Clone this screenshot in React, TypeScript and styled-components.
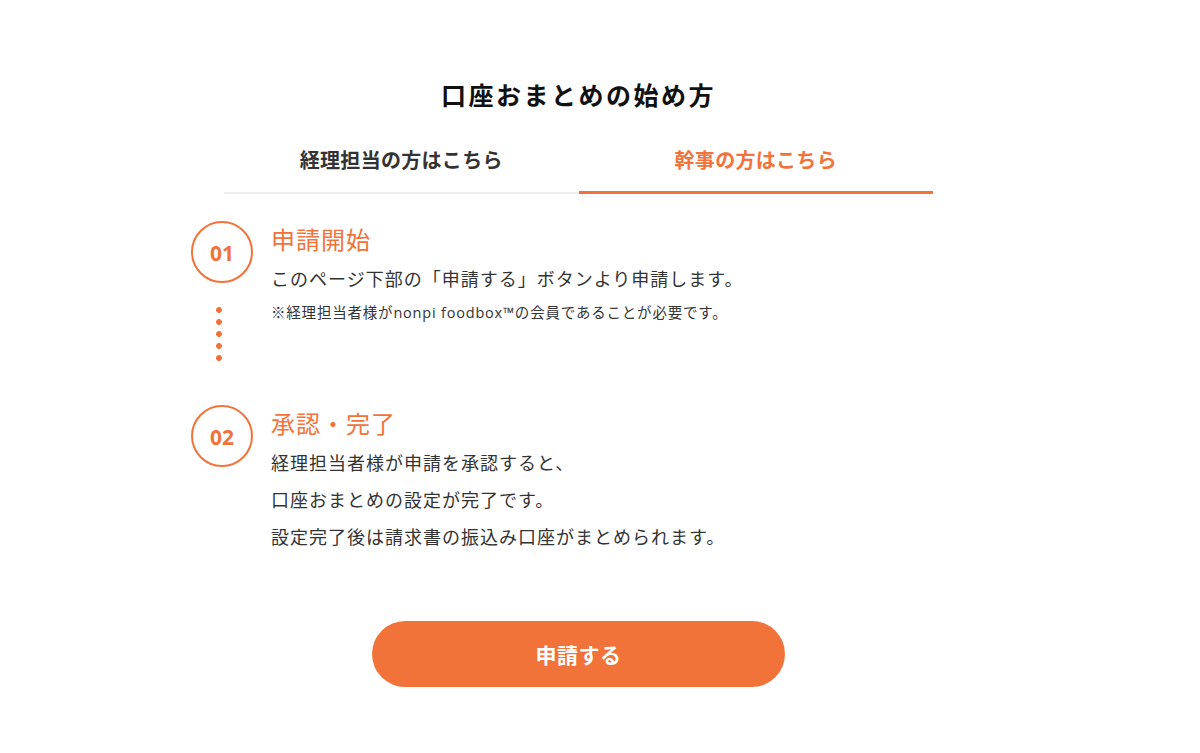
import styled, { createGlobalStyle } from "styled-components";

const ORANGE = "#f2733a";

const GlobalStyle = createGlobalStyle`
  body {
    margin: 0;
    background: #fff;
    font-family: "Noto Sans CJK JP", "Noto Sans", sans-serif;
    color: #333;
  }
`;

const Page = styled.div`
  padding: 75px 43px 0 0;
`;
const Title = styled.h2`
  margin: 0;
  text-align: center;
  font-size: 25px;
  line-height: 38px;
  font-weight: 700;
  letter-spacing: 2.5px;
  color: #111;
`;
const Tabs = styled.div`
  width: 709px;
  margin: 30px auto 0;
  display: grid;
  grid-template-columns: 1fr 1fr;
  border-bottom: 2px solid #eee;
`;
const Tab = styled.div<{ $active?: boolean }>`
  text-align: center;
  font-size: 20px;
  line-height: 34px;
  font-weight: 700;
  letter-spacing: 0.3px;
  padding-bottom: 14px;
  margin-bottom: -2px;
  color: ${(p) => (p.$active ? ORANGE : "#333")};
  border-bottom: 3px solid ${(p) => (p.$active ? ORANGE : "transparent")};
  cursor: pointer;
`;
const Steps = styled.div`
  width: 775px;
  margin: 27px auto 0;
  display: flex;
  flex-direction: column;
  gap: 41px;
`;
const Step = styled.div`
  display: grid;
  grid-template-columns: 62px 1fr;
  column-gap: 18px;
`;
const Side = styled.div`
  display: flex;
  flex-direction: column;
`;
const Num = styled.div`
  width: 62px;
  height: 62px;
  box-sizing: border-box;
  border: 2px solid ${ORANGE};
  border-radius: 50%;
  display: flex;
  align-items: center;
  justify-content: center;
  color: ${ORANGE};
  font-family: "Open Sans", "Noto Sans", sans-serif;
  font-weight: 700;
  font-size: 21px;
  padding-top: 1px;
`;
const Dots = styled.div`
  width: 6px;
  height: 63px;
  margin: 18px 0 0 25px;
  background-image: radial-gradient(circle, ${ORANGE} 2.6px, transparent 3.2px);
  background-size: 6px 12px;
  background-position: center bottom;
  background-repeat: repeat-y;
`;
const StepTitle = styled.h3`
  margin: 0;
  font-size: 24px;
  line-height: 36px;
  font-weight: 400;
  letter-spacing: 1px;
  color: ${ORANGE};
`;
const Body = styled.div`
  margin-top: 3px;
  font-size: 18px;
  line-height: 37px;
  letter-spacing: 1px;
  color: #333;
`;
const Note = styled.div`
  font-family: "Open Sans", "Noto Sans CJK JP", sans-serif;
  font-size: 14.5px;
  line-height: 32px;
  letter-spacing: 0.8px;
  color: #333;
`;
const ApplyButton = styled.button`
  display: block;
  width: 413px;
  height: 66px;
  margin: 66px auto 0;
  border: none;
  border-radius: 33px;
  background: ${ORANGE};
  color: #fff;
  font-family: inherit;
  font-size: 21px;
  font-weight: 700;
  letter-spacing: 0.5px;
  cursor: pointer;
`;

export default function App() {
  return (
    <Page>
      <GlobalStyle />
      <Title>口座おまとめの始め方</Title>
      <Tabs>
        <Tab>経理担当の方はこちら</Tab>
        <Tab $active>幹事の方はこちら</Tab>
      </Tabs>
      <Steps>
        <Step>
          <Side>
            <Num>01</Num>
            <Dots />
          </Side>
          <div>
            <StepTitle>申請開始</StepTitle>
            <Body>このページ下部の「申請する」ボタンより申請します。</Body>
            <Note>※経理担当者様がnonpi foodbox™の会員であることが必要です。</Note>
          </div>
        </Step>
        <Step>
          <Side>
            <Num>02</Num>
          </Side>
          <div>
            <StepTitle>承認・完了</StepTitle>
            <Body>
              経理担当者様が申請を承認すると、
              <br />
              口座おまとめの設定が完了です。
              <br />
              設定完了後は請求書の振込み口座がまとめられます。
            </Body>
          </div>
        </Step>
      </Steps>
      <ApplyButton>申請する</ApplyButton>
    </Page>
  );
}
